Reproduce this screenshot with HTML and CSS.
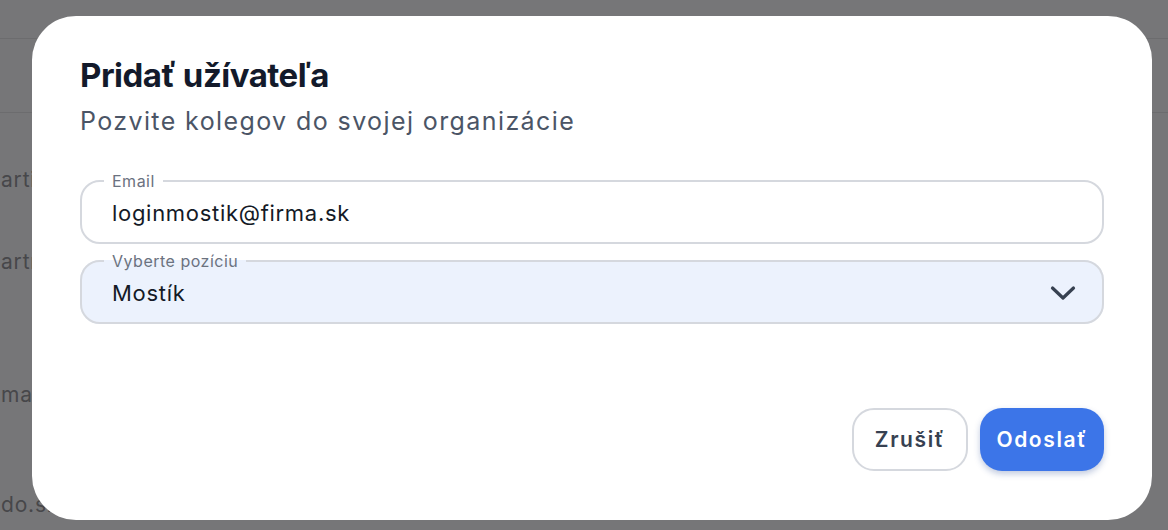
FILE: index.html
```html
<!DOCTYPE html>
<html lang="sk">
<head>
<meta charset="utf-8">
<title>Pridať užívateľa</title>
<link rel="stylesheet" href="styles.css">
</head>
<body>
<div class="page">
  <div class="page-top"></div>
  <div class="page-head"></div>
  <div class="page-rows">
    <div class="page-row row-1">artin.kral@firma.sk</div>
    <div class="page-row row-2">artmann@firma.sk</div>
    <div class="page-row row-3">mara.novak@firma.sk</div>
    <div class="page-row row-4">do.sk</div>
  </div>
</div>

<div class="modal" role="dialog" aria-labelledby="modal-title">
  <h1 class="modal-title" id="modal-title">Pridať užívateľa</h1>
  <p class="modal-subtitle">Pozvite kolegov do svojej organizácie</p>

  <form class="modal-form">
    <fieldset class="field">
      <legend class="field-label">Email</legend>
      <div class="field-value">loginmostik@firma.sk</div>
    </fieldset>

    <fieldset class="field field-select">
      <legend class="field-label">Vyberte pozíciu</legend>
      <div class="field-value">Mostík</div>
      <svg class="chevron" width="26" height="16" viewBox="0 0 26 16" aria-hidden="true">
        <path d="M2.5 3 L13 13 L23.5 3" fill="none" stroke="#374151" stroke-width="3.2" stroke-linecap="round" stroke-linejoin="round"/>
      </svg>
    </fieldset>
  </form>

  <div class="modal-actions">
    <button type="button" class="btn btn-secondary">Zrušiť</button>
    <button type="button" class="btn btn-primary">Odoslať</button>
  </div>
</div>
</body>
</html>
```

FILE: styles.css
```css
* { box-sizing: border-box; }

html, body {
  margin: 0;
  padding: 0;
  height: 100%;
}

body {
  background: #767678;
  font-family: "Inter", "Noto Sans", sans-serif;
  overflow: hidden;
}

.page {
  display: flex;
  flex-direction: column;
}

.page-top {
  height: 39px;
  border-bottom: 1px solid #6c6c6e;
}

.page-head {
  height: 74px;
  border-bottom: 1px solid #6c6c6e;
}

.page-rows {
  display: flex;
  flex-direction: column;
}

.page-row {
  font-size: 21px;
  line-height: 24px;
  color: #47474a;
  white-space: nowrap;
  padding-left: 1px;
  letter-spacing: 0.8px;
}

.row-1 { margin-top: 55px; }
.row-2 { margin-top: 58px; }
.row-3 { margin-top: 109px; }
.row-4 { margin-top: 86px; }

.modal {
  position: fixed;
  top: 16px;
  left: 32px;
  width: 1120px;
  height: 504px;
  background: #ffffff;
  border-radius: 44px;
  padding: 41px 48px 49px 48px;
  display: flex;
  flex-direction: column;
}

.modal-title {
  margin: 0;
  font-size: 33px;
  line-height: 36px;
  font-weight: 700;
  letter-spacing: -0.5px;
  color: #131a2b;
}

.modal-subtitle {
  margin: 13px 0 0 0;
  font-size: 25px;
  line-height: 30px;
  font-weight: 400;
  letter-spacing: 1.4px;
  color: #4b5566;
}

.modal-form {
  display: flex;
  flex-direction: column;
  gap: 8px;
  margin-top: 36px;
}

.field {
  margin: 0;
  border: 2px solid #d5d8de;
  border-radius: 20px;
  padding: 9px 30px 15px 30px;
  min-width: 0;
  display: flex;
  align-items: center;
  justify-content: space-between;
  background: #ffffff;
}

.field-select {
  background: #ecf2fd;
}

.field-label {
  padding: 0 8px;
  margin-left: -8px;
  font-size: 16px;
  line-height: 18px;
  letter-spacing: 0.5px;
  color: #6b7280;
}

.field-value {
  font-size: 22px;
  line-height: 28px;
  letter-spacing: 0.7px;
  color: #141a26;
}

.chevron {
  display: block;
  margin-right: -4px;
}

.modal-actions {
  margin-top: auto;
  display: flex;
  justify-content: flex-end;
  gap: 12px;
}

.btn {
  height: 63px;
  border-radius: 22px;
  font-family: "Inter", "Noto Sans", sans-serif;
  font-size: 21px;
  font-weight: 600;
  letter-spacing: 1.6px;
  cursor: pointer;
}

.btn-secondary {
  background: #ffffff;
  border: 2px solid #d5d8de;
  color: #374151;
  padding: 0 20px;
  width: 116px;
}

.btn-primary {
  background: #3c75e8;
  border: none;
  color: #ffffff;
  width: 124px;
  padding: 0 14px;
  box-shadow: 0 3px 6px rgba(30, 64, 140, 0.28);
}
```
